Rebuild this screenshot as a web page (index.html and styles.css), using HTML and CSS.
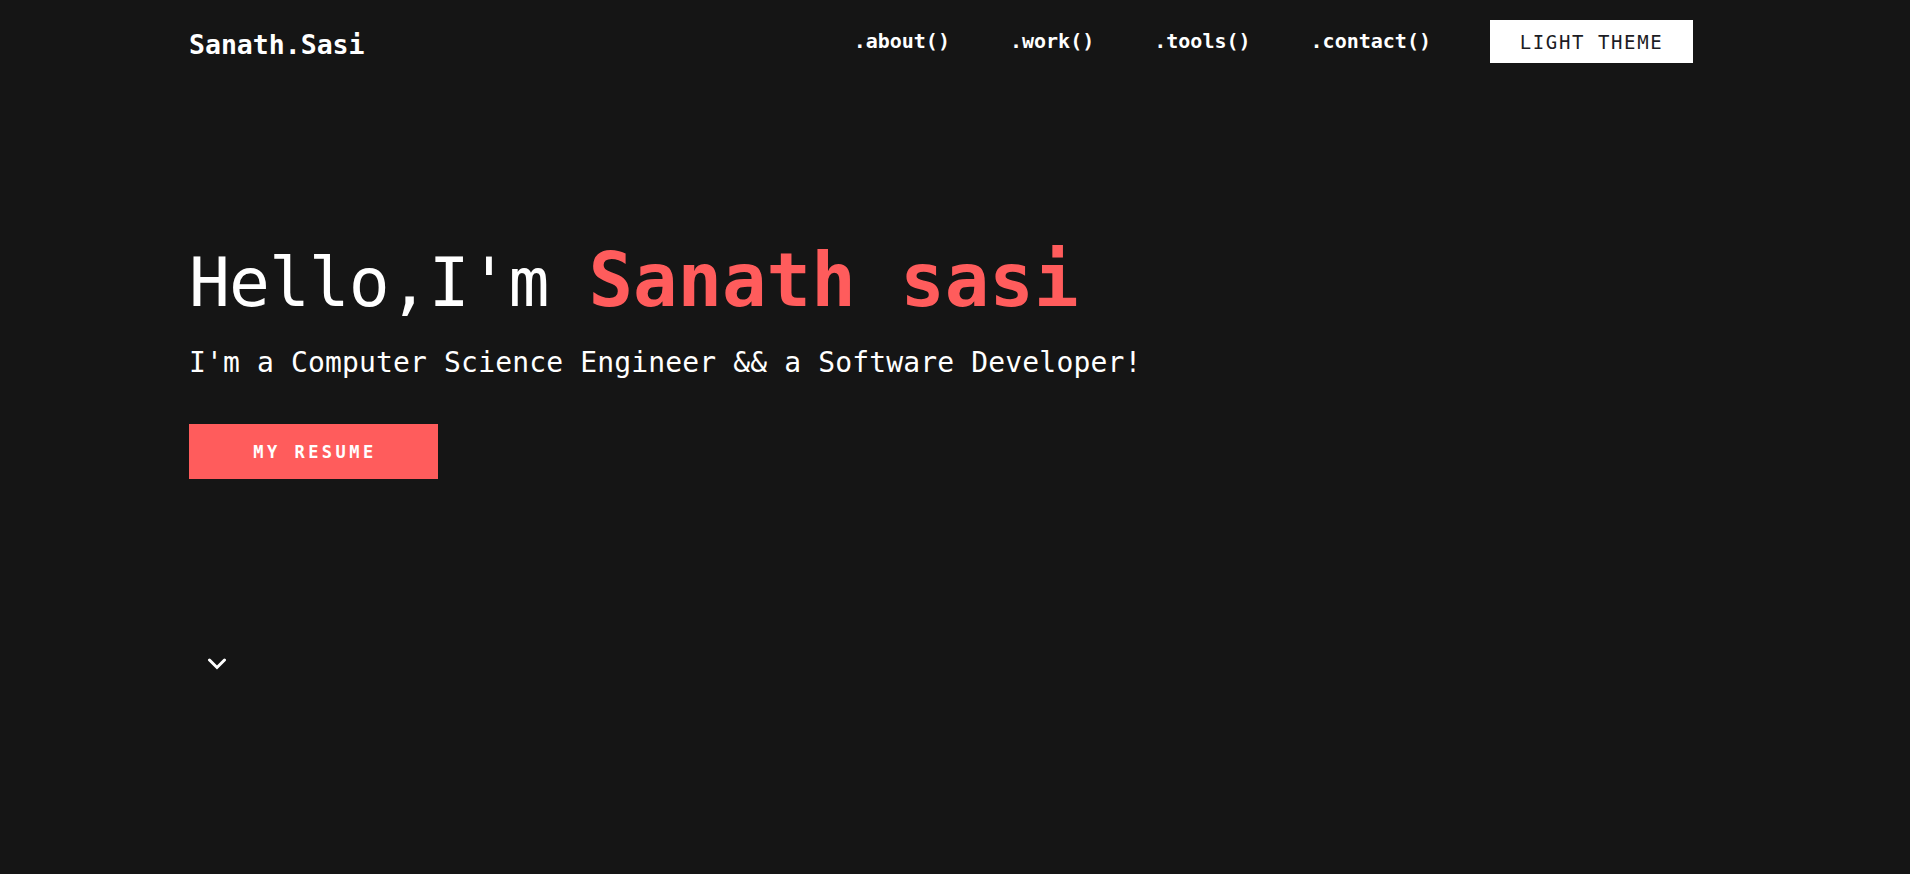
FILE: index.html
```html
<!DOCTYPE html>
<html lang="en">
<head>
<meta charset="utf-8">
<title>Sanath.Sasi</title>
<link rel="stylesheet" href="styles.css">
</head>
<body>
<div class="page">
  <header class="header">
    <a class="logo" href="#">Sanath.Sasi</a>
    <nav class="nav">
      <a class="nav-link" href="#about">.about()</a>
      <a class="nav-link" href="#work">.work()</a>
      <a class="nav-link" href="#tools">.tools()</a>
      <a class="nav-link" href="#contact">.contact()</a>
      <button class="theme-btn" type="button">LIGHT THEME</button>
    </nav>
  </header>
  <main class="hero">
    <h1 class="hero-title">Hello,I'm <span class="hero-name">Sanath sasi</span></h1>
    <p class="hero-sub">I'm a Computer Science Engineer &amp;&amp; a Software Developer!</p>
    <a class="resume-btn" href="#">MY RESUME</a>
    <div class="scroll-down">
      <svg width="20" height="12" viewBox="0 0 20 12" aria-hidden="true">
        <polyline points="2.5,2 10,9.5 17.5,2" fill="none" stroke="#ffffff" stroke-width="3" stroke-linecap="round" stroke-linejoin="miter"/>
      </svg>
    </div>
  </main>
</div>
</body>
</html>
```

FILE: styles.css
```css
* {
  box-sizing: border-box;
}

html, body {
  margin: 0;
  padding: 0;
  background: #151515;
}

body {
  width: 1910px;
  height: 874px;
  overflow: hidden;
  font-family: "DejaVu Sans Mono", "Liberation Mono", monospace;
  color: #ffffff;
}

a {
  color: inherit;
  text-decoration: none;
}

.page {
  padding: 20px 217px 0 189px;
}

.header {
  display: flex;
  justify-content: space-between;
  align-items: flex-start;
}

.logo {
  margin-top: 10px;
  font-size: 26.5px;
  line-height: 30px;
  font-weight: bold;
}

.nav {
  display: flex;
  align-items: flex-start;
  gap: 60px;
}

.nav-link {
  font-size: 20px;
  font-weight: bold;
  line-height: 43px;
}

.theme-btn {
  width: 203px;
  height: 43px;
  margin-left: -1px;
  padding: 1px 0 0 0;
  border: none;
  background: #ffffff;
  color: #1c1c24;
  font-family: "DejaVu Sans Mono", "Liberation Mono", monospace;
  font-size: 19px;
  line-height: 42px;
  letter-spacing: 1.6px;
  cursor: pointer;
}

.hero {
  padding-top: 172px;
  display: flex;
  flex-direction: column;
  align-items: flex-start;
}

.hero-title {
  margin: 0;
  font-size: 68px;
  line-height: 90px;
  font-weight: normal;
  letter-spacing: -1px;
  white-space: nowrap;
}

.hero-name {
  font-size: 74px;
  font-weight: bold;
  color: #ff5c5c;
  letter-spacing: 0;
}

.hero-sub {
  margin: 17px 0 0 0;
  font-size: 28px;
  line-height: 36px;
  letter-spacing: 0.15px;
  white-space: nowrap;
}

.resume-btn {
  margin-top: 43px;
  width: 249px;
  height: 55px;
  display: flex;
  align-items: center;
  justify-content: center;
  background: #ff5c5c;
  color: #ffffff;
  font-size: 17px;
  font-weight: bold;
  letter-spacing: 3.5px;
  padding-left: 3px;
}

.scroll-down {
  margin: 179px 0 0 18px;
  width: 20px;
  height: 12px;
  display: flex;
}
```
